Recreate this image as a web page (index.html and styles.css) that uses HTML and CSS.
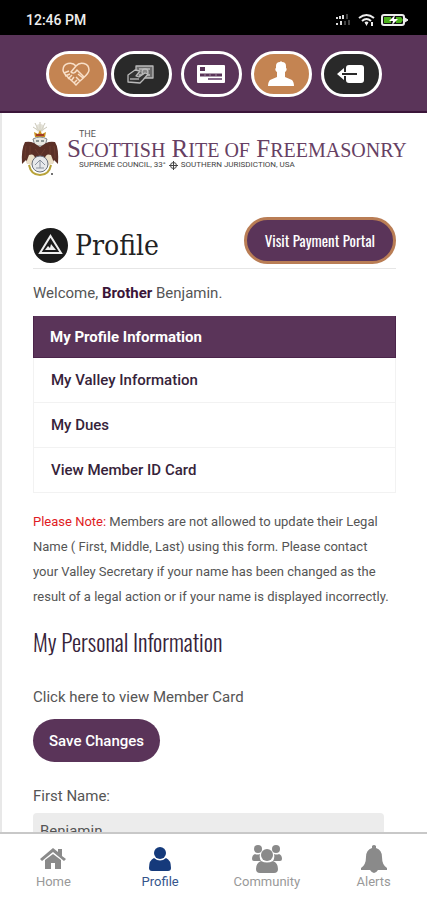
FILE: index.html
```html
<!DOCTYPE html>
<html lang="en">
<head>
<meta charset="utf-8">
<meta name="viewport" content="width=device-width, initial-scale=1">
<title>Profile</title>
<link rel="stylesheet" href="styles.css">
</head>
<body>
<div class="app">
  <div class="status">
    <span>12:46 PM</span>
    <svg width="76" height="16" viewBox="0 0 76 16" aria-hidden="true">
      <g fill="#ddd"><path d="M2 5h2v2H2zM5 4h2v3H5zM8 3h2v4H8zM2 11h2v2H2zM6 9h2v4H6z"/><path d="M12 2h2v5h-2zM10 9h2v4h-2zM14 8h2v5h-2z" opacity=".3"/></g>
      <g fill="none" stroke="#eee" stroke-width="2"><path d="M25 6q7.500-6 15 0M28 9q4.500-4 9 0M31 11q1.500-1 3 0"/></g>
      <path d="M31 11h3l-1.500 3zM37 10h2v4h-2z" fill="#eee"/>
      <rect x="48" y="3" width="22" height="10" rx="2" fill="#111" stroke="#eee" stroke-width="2"/>
      <path d="M71 6l3 2-3 2z" fill="#eee" stroke="#eee"/>
      <path d="M50 5h7v6h-7zM62 5h5l2 3-2 3h-5z" fill="#4cb01c"/>
      <path d="M61 3l-6 6h4l-1 4 6-6h-4z" fill="#fff"/>
    </svg>
  </div>
  <header class="toolbar">
    <div class="pair">
      <button class="pill tan" aria-label="Charity">
        <svg width="28" height="24" viewBox="0 0 28 24" fill="none" stroke="#f8dfc8" stroke-width="1.500" stroke-linejoin="round"><path d="M14 4C10-1 1 1 1 8c0 5 7 8 13 15C20 16 27 13 27 8c0-7-9-9-13-4l-5 6c2 2 4 1 6-2l7 7M2 11l5-2M3 14l5-2M6 17l4-4M9 19l3-4M12 21l3-3M16 12l5 4M14 15l4 4"/></svg>
      </button>
      <button class="pill dark" aria-label="Payments">
        <svg width="28" height="20" viewBox="0 0 28 20" stroke="#bbb" stroke-width="1.300" stroke-linejoin="round"><path d="M9 2h17v12H9z" fill="#6a6a6a"/><path d="M12 5h11M12 11h11" fill="none"/><circle cx="18" cy="8" r="3" fill="#888"/><path d="M1 18v-7l7-5 5 1-4 5 3 1 6-4 3 1-5 6-3 3z" fill="#333"/><path d="M3 15h9" fill="none"/></svg>
      </button>
    </div>
    <button class="pill" aria-label="Member card">
      <svg width="28" height="20" viewBox="0 0 28 20"><rect y="1" width="28" height="18" rx="1" fill="#fff"/><path d="M3 3h5v4H3z" fill="#5a3459"/><path d="M3 11h22" stroke="#5a3459" stroke-width="3"/><path d="M8 10v2M13 10v2M19 10v2" stroke="#9a829a"/><path d="M11 15h14" stroke="#85678a" stroke-width="2"/></svg>
    </button>
    <button class="pill tan" aria-label="Account">
      <svg width="26" height="26" viewBox="0 0 26 26" fill="#fff"><path d="M8 5q0-4 4-4l1-1 1 1q4 0 4 4v2c1 0 1 3-1 4v5l7 3c1 1 2 3 2 6H0c0-3 1-5 2-6l7-3v-5C7 10 7 7 8 7z"/></svg>
    </button>
    <button class="pill dark" aria-label="Sign out">
      <svg width="28" height="20" viewBox="0 0 28 20"><rect x="9" y="1" width="18" height="18" rx="3" fill="#fff"/><path d="M6 10h14" stroke="#292929" stroke-width="2"/><path d="M7 4L0 10l7 6v-4h2v-1H5V9h4V8H7z" fill="#fff"/></svg>
    </button>
  </header>
  <main class="page">
    <div class="brand">
      <svg width="38" height="57" viewBox="0 0 38 57" aria-hidden="true">
        <g stroke="#c9c6b8"><path d="M19 2v9M14 3l4 8M24 3l-4 8M12 7l6 4M26 7l-6 4"/></g>
        <circle cx="19" cy="8" r="4" fill="#d8d6c8" opacity=".7"/>
        <path d="M14 17l-1-5 4 2 2-4 2 4 4-2-1 5z" fill="#c9911f"/><path d="M15 14h8v2h-8z" fill="#a33b24"/>
        <path d="M12 19q7-4 14 0l-2 7H14z" fill="#e8e8e2" stroke="#81868a"/>
        <path d="M15 21h3M20 21h3" stroke="#334444"/>
        <path d="M13 23Q9 21 4 22 0 29 1 44l4-4 2 4 5-5 7 4 7-4 5 5 2-4 4 4Q38 28 34 22q-5-1-9 1l-6 4z" fill="#5b3027"/>
        <path d="M5 26q-1 5-1 12M9 26v12M29 26v12M33 26q1 6 1 12M14 29l5 7 5-7" stroke="#6c3d30" fill="none"/>
        <path d="M8 35q5-2 6 3l-2 8-7-3zM30 35q-5-2-6 3l2 8 7-3z" fill="#ece0c8"/>
        <circle cx="19" cy="44" r="8" fill="#e7e9ec" stroke="#69707c"/><path d="M14 45l5-5 5 5M15 48h8M19 40v8" stroke="#8a929e" fill="none"/>
        <path d="M8 45q2 10 11 10t11-10" fill="none" stroke="#b8a33a" stroke-width="2"/>
        <circle cx="31" cy="54" r="1" fill="#444"/>
      </svg>
      <div class="brand-text">
        <span class="the">THE</span>
        <span class="name">S<small>COTTISH</small> R<small>ITE OF</small> F<small>REEMASONRY</small></span>
        <span class="council">SUPREME COUNCIL, 33° <svg width="9" height="9" viewBox="0 0 9 9" fill="none" stroke="#444"><circle cx="4.500" cy="4.500" r="3"/><path d="M4.500 0v9M0 4.500h9"/></svg> SOUTHERN JURISDICTION, USA</span>
      </div>
    </div>
    <div class="content">
      <div class="title-row">
        <h1><svg width="35" height="35" viewBox="0 0 35 35" aria-hidden="true"><circle cx="17.500" cy="17.500" r="17.500" fill="#1b1b1b"/><path d="M17.500 8L28 25H7z" fill="none" stroke="#eee" stroke-width="2"/><path d="M12 22l3-4 2 2 1-4 5 6z" fill="#eee"/></svg>Profile</h1>
        <a class="portal" href="#">Visit Payment Portal</a>
      </div>
      <p class="welcome">Welcome, <b>Brother</b> Benjamin.</p>
      <nav class="tabs" aria-label="Profile sections">
        <a class="active" href="#">My Profile Information</a>
        <a href="#">My Valley Information</a>
        <a href="#">My Dues</a>
        <a href="#">View Member ID Card</a>
      </nav>
      <p class="note"><span>Please Note:</span> Members are not allowed to update their Legal Name ( First, Middle, Last) using this form. Please contact your Valley Secretary if your name has been changed as the result of a legal action or if your name is displayed incorrectly.</p>
      <h2>My Personal Information</h2>
      <a class="card-link" href="#">Click here to view Member Card</a>
      <button class="save">Save Changes</button>
      <label for="first">First Name:</label>
      <input id="first" type="text" value="Benjamin">
    </div>
  </main>
  <nav class="bottom" aria-label="Main">
    <a href="#"><svg width="26" height="28" viewBox="0 0 26 28" fill="#8a8a8a"><path d="M13 3l5 4V4h4v7l4 3-2 2L13 7 2 16l-2-2z"/><path d="M13 9l8 6v9h-6v-6h-4v6H5v-9z"/></svg>Home</a>
    <a class="current" href="#"><svg width="26" height="28" viewBox="0 0 26 28" fill="#153a7b"><circle cx="13" cy="8" r="6"/><path d="M7 13q6 5 12 0 5 2 5 10 0 3-3 3H5q-3 0-3-3 0-8 5-10z"/></svg>Profile</a>
    <a href="#"><svg width="30" height="28" viewBox="0 0 30 28" fill="#8a8a8a"><circle cx="6" cy="4" r="4"/><circle cx="24" cy="4" r="4"/><circle cx="15" cy="10" r="6"/><path d="M3 9q2 1 5 0-1 4 1 7H2q-2 0-2-2 0-4 3-5zM27 9q-2 1-5 0 1 4-1 7h7q2 0 2-2 0-4-3-5zM9 16q6 3 12 0 5 2 5 8 0 4-4 4H8q-4 0-4-4 0-6 5-8z"/></svg>Community</a>
    <a href="#"><svg width="26" height="28" viewBox="0 0 26 28" fill="#8a8a8a"><path d="M11 3V1q2-2 4 0v2q6 2 6 9 0 8 5 11v2H0v-2q5-3 5-11 0-7 6-9zM9 25h8q-4 6-8 0z"/></svg>Alerts</a>
  </nav>
</div>
</body>
</html>
```
FILE: styles.css
```css
* { box-sizing: border-box; }
body { margin: 0; font-family: Roboto, sans-serif; color: #555; background: #fff; }
a { color: inherit; text-decoration: none; }
button { font: inherit; border: 0; cursor: pointer; }
svg { display: block; flex: none; }
.app { height: 100vh; display: flex; flex-direction: column; overflow: hidden; }
.status { flex: none; height: 35px; padding: 4px 17px 0 26px; background: #000; color: #eee; font-size: 14px; font-weight: 500; display: flex; align-items: center; justify-content: space-between; }
.toolbar { flex: none; height: 78px; padding-top: 2px; background: #5a3459; border-bottom: 2px solid #3b1539; display: flex; align-items: center; justify-content: center; gap: 9px; }
.pair { display: flex; gap: 4px; }
.pill { width: 61px; height: 46px; padding: 0; border: 3px solid #fff; border-radius: 23px; background: #5a3459; display: flex; align-items: center; justify-content: center; }
.pill.tan { background: #c48452; }
.pill.dark { background: #292929; }
.page { flex: 1; min-height: 0; overflow: hidden; border-left: 2px solid #e8e8e8; }
.brand { display: flex; gap: 8px; padding: 7px 20px 0 19px; }
.brand-text { display: flex; flex-direction: column; padding-top: 9px; white-space: nowrap; }
.the { font-size: 9px; line-height: 10px; padding-left: 12px; }
.name { font-family: "Liberation Serif", serif; font-size: 25px; line-height: 20px; color: #664063; }
.name small { font-size: 20px; }
.council { display: flex; align-items: center; gap: 3px; padding-left: 12px; font-size: 8px; line-height: 10px; color: #444; }
.content { padding: 40px 31px 0; }
.title-row { display: flex; justify-content: space-between; align-items: flex-start; height: 52px; border-bottom: 1px solid #e6e6e6; }
h1 { margin: 11px 0 0; display: flex; align-items: center; gap: 7px; font-family: "Roboto Slab", "DejaVu Serif Condensed", "DejaVu Serif", serif; font-size: 28px; line-height: 35px; font-weight: 300; color: #222; }
.portal { padding: 0 18px; border: 3px solid #b97d55; border-radius: 24px; background: #5a3459; color: #fff; font-family: Oswald, "Liberation Sans Narrow", sans-serif; font-size: 15px; line-height: 41px; font-weight: 400; }
.welcome { margin: 12px 0 11px; font-size: 15px; line-height: 24px; }
.welcome b { color: #3b1539; }
.tabs a { display: block; height: 45px; padding: 0 17px; border: 1px solid #f2f2f2; border-top: 0; font-size: 15px; line-height: 44px; font-weight: 500; color: #36233a; }
.tabs .active { height: 42px; padding: 0 16px; background: #5a3459; border-color: #4b244a; color: #fff; font-weight: 700; line-height: 42px; }
.note { margin: 16px 0 0; padding-right: 3px; font-size: 13px; line-height: 25px; }
.note span { color: #e01b24; }
h2 { margin: 18px 0 28px; font-family: Oswald, "Liberation Sans Narrow", sans-serif; font-size: 23px; line-height: 30px; font-weight: 300; color: #36233a; }
.card-link { display: block; font-size: 15px; line-height: 24px; }
.save { display: block; margin: 10px 0 22px; height: 43px; padding: 0 16px; border-radius: 22px; background: #5a3459; color: #fff; font-size: 15px; font-weight: 500; }
label { display: block; font-size: 15px; line-height: 24px; }
input { display: block; width: calc(100% - 12px); height: 36px; margin-top: 5px; padding: 0 7px; border: 0; border-radius: 4px; background: #ececec; color: #555; font: 15px Roboto, sans-serif; }
.bottom { flex: none; height: 68px; padding-top: 11px; border-top: 2px solid #c8c8c8; background: #fff; display: grid; grid-template-columns: repeat(4, 1fr); }
.bottom a { display: flex; flex-direction: column; align-items: center; font-size: 13px; line-height: 18px; color: #999; }
.bottom .current { color: #35558c; }
```
